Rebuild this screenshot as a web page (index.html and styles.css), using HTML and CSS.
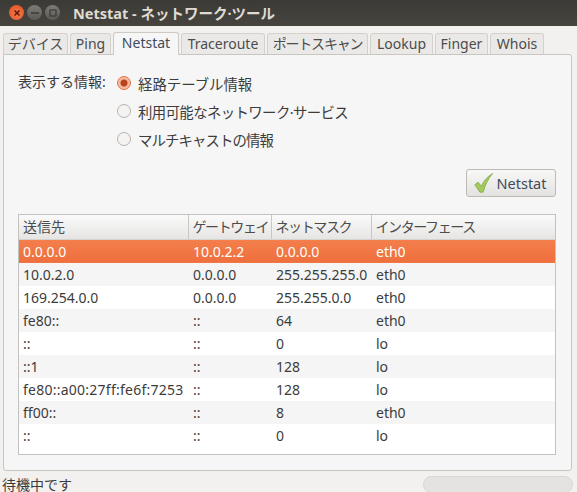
FILE: index.html
```html
<!DOCTYPE html>
<html lang="ja">
<head>
<meta charset="utf-8">
<title>Netstat - ネットワーク·ツール</title>
<link rel="stylesheet" href="styles.css">
</head>
<body>
<div class="window">
  <header class="titlebar">
    <div class="controls">
      <span class="wbtn close"><svg width="8" height="8" viewBox="0 0 8 8"><path d="M1.500 1.500l5 5M6.500 1.500l-5 5" stroke="#5a1a08" stroke-width="1.5"/></svg></span>
      <span class="wbtn"><svg width="10" height="8" viewBox="0 0 10 8"><path d="M1 4h8" stroke="#3c3b37" stroke-width="1.5"/></svg></span>
      <span class="wbtn"><svg width="8" height="8" viewBox="0 0 8 8"><rect x="1" y="1" width="6" height="6" fill="none" stroke="#3c3b37" stroke-width="1.2"/></svg></span>
    </div>
    <div class="title">Netstat - ネットワーク·ツール</div>
  </header>
  <nav class="tabs">
    <div class="tab t1">デバイス</div>
    <div class="tab t2">Ping</div>
    <div class="tab t3 active">Netstat</div>
    <div class="tab t4">Traceroute</div>
    <div class="tab t5">ポートスキャン</div>
    <div class="tab t6">Lookup</div>
    <div class="tab t7">Finger</div>
    <div class="tab t8">Whois</div>
  </nav>
  <main class="panel">
    <section class="options">
      <div class="opt-label">表示する情報:</div>
      <div class="radios">
        <div class="radio-row"><span class="radio on"></span>経路テーブル情報</div>
        <div class="radio-row r2"><span class="radio"></span>利用可能なネットワーク·サービス</div>
        <div class="radio-row r3"><span class="radio"></span>マルチキャストの情報</div>
      </div>
    </section>
    <div class="actions">
      <button class="btn">
        <svg width="22" height="22" viewBox="0 0 24 24"><path d="M2 14l3.500-3 3.500 4.500C11.500 10 15.500 5 21.500 1.500c-4.500 5-8 12-10.500 20.500H7.500z" fill="#a3cb5c" stroke="#7ba33f" stroke-width="0.8" stroke-linejoin="round"/></svg>
        Netstat
      </button>
    </div>
    <div class="table-box">
      <table>
        <colgroup><col class="c1"><col class="c2"><col class="c3"><col class="c4"></colgroup>
        <thead><tr><th>送信先</th><th class="kana">ゲートウェイ</th><th class="kana">ネットマスク</th><th class="kana">インターフェース</th></tr></thead>
        <tbody>
          <tr class="sel"><td>0.0.0.0</td><td>10.0.2.2</td><td>0.0.0.0</td><td>eth0</td></tr>
          <tr class="alt"><td>10.0.2.0</td><td>0.0.0.0</td><td>255.255.255.0</td><td>eth0</td></tr>
          <tr><td>169.254.0.0</td><td>0.0.0.0</td><td>255.255.0.0</td><td>eth0</td></tr>
          <tr class="alt"><td>fe80::</td><td>::</td><td>64</td><td>eth0</td></tr>
          <tr><td>::</td><td>::</td><td>0</td><td>lo</td></tr>
          <tr class="alt"><td>::1</td><td>::</td><td>128</td><td>lo</td></tr>
          <tr><td class="wide">fe80::a00:27ff:fe6f:7253</td><td>::</td><td>128</td><td>lo</td></tr>
          <tr class="alt"><td>ff00::</td><td>::</td><td>8</td><td>eth0</td></tr>
          <tr><td>::</td><td>::</td><td>0</td><td>lo</td></tr>
        </tbody>
      </table>
    </div>
  </main>
  <footer class="status">
    <span class="status-text">待機中です</span>
    <span class="progress"></span>
  </footer>
</div>
</body>
</html>
```
FILE: styles.css
```css
* { box-sizing: border-box; }
html, body { margin: 0; padding: 0; }
body {
  width: 577px; height: 492px; overflow: hidden;
  font-family: "Noto Sans", "Noto Sans CJK JP", sans-serif;
  font-size: 14px; color: #3c3c3c; background: #f2f1f0;
}
.window { display: flex; flex-direction: column; height: 492px; }
.titlebar {
  height: 26px; flex: none; display: flex; align-items: center;
  background: linear-gradient(#3b3a36, #47443e);
  padding-left: 9px; padding-bottom: 1px;
}
.controls { display: flex; gap: 3px; }
.wbtn {
  width: 15px; height: 15px; border-radius: 50%;
  display: flex; align-items: center; justify-content: center;
  background: linear-gradient(#7d7c77, #5a5954);
}
.wbtn.close { background: radial-gradient(circle at 50% 60%, #f7794a, #dd4f22); }
.title { margin-left: 13px; color: #dfdbd2; font-weight: 700; font-size: 14.5px; line-height: 20px; }
.tabs { height: 28px; flex: none; display: flex; align-items: flex-end; padding-left: 3px; gap: 2px; }
.tab {
  height: 21px; text-align: center; line-height: 19px; font-size: 14px;
  border: 1px solid #d4d1cd; border-bottom: 0; border-radius: 3px 3px 0 0;
  background: #ebe9e7; color: #4c4c4c; white-space: nowrap;
}
.tab.active { height: 23px; background: #f6f6f6; border-color: #cdcac6; line-height: 20px; position: relative; top: 1px; color: #3f4a5a; }
.t1 { width: 65px; } .t2 { width: 41px; } .t3 { width: 66px; } .t4 { width: 84px; }
.t5 { width: 101px; letter-spacing: -1.2px; } .t6 { width: 63px; } .t7 { width: 53px; } .t8 { width: 54px; }
.panel {
  margin: 0 5px 0 3px; height: 417px; flex: none; padding: 14px 15px 15px 14px;
  background: #f6f6f6; border: 1px solid #c9c6c2; border-radius: 0 3px 3px 3px;
  display: flex; flex-direction: column;
}
.options { display: flex; height: 84px; }
.opt-label { width: 99px; line-height: 26px; }
.radios { display: flex; flex-direction: column; }
.radio-row { height: 28px; display: flex; align-items: center; gap: 7px; font-size: 14.4px; }
.r2 { letter-spacing: -.6px; }
.r3 { letter-spacing: -.9px; }
.radio {
  width: 14px; height: 14px; border-radius: 50%; background: #f4f3f2; border: 1px solid #b6b3af; flex: none;
}
.radio.on { background: radial-gradient(circle, #b8431e 0 3px, #f5b79c 4px, #f7c4ad 100%); border-color: #e2703f; }
.actions { display: flex; justify-content: flex-end; height: 30px; margin-top: 15px; }
.btn {
  width: 90px; height: 28px; margin-top: 1px; padding: 0 3px 0 0; display: flex; align-items: center; justify-content: center; gap: 2px;
  font: inherit; font-size: 14.5px; color: #3f4a5a; border: 1px solid #bdbab6; border-radius: 3px;
  background: linear-gradient(#f8f8f7, #e4e2e0);
}
.table-box { margin-top: 16px; height: 241px; background: #fff; border: 1px solid #c4c2be; flex: none; }
table { width: 100%; border-collapse: collapse; table-layout: fixed; }
.c1 { width: 169px; } .c2 { width: 83px; } .c3 { width: 100px; } .c4 { width: 184px; }
th {
  height: 24px; padding: 0 0 0 4px; text-align: left; font-weight: 400; color: #4c4c4c; white-space: nowrap; line-height: 23px;
  background: linear-gradient(#fafafa, #e6e5e4); border-right: 1px solid #c9c7c3; border-bottom: 1px solid #d4d2cf;
}
th.kana { letter-spacing: -1.4px; }
th:last-child { border-right: 0; }
td { height: 23px; padding: 0 0 0 5px; white-space: nowrap; overflow: visible; line-height: 23px; }
td:first-child { padding-left: 4px; }
td.wide { letter-spacing: .25px; }
tr.alt td { background: #f5f5f5; }
tr.sel td { background: linear-gradient(#f37f4c, #ee6f3d); color: #fff; border-top: 1px solid #d7623a; }
.status { flex: 1; display: flex; justify-content: space-between; align-items: center; padding-top: 5px; }
.status-text { margin-left: 2px; line-height: 16px; }
.progress {
  width: 150px; height: 17px; margin-right: 4px; border-radius: 9px; background: #e4e3e1; border: 1px solid #d8d6d3;
}
```
